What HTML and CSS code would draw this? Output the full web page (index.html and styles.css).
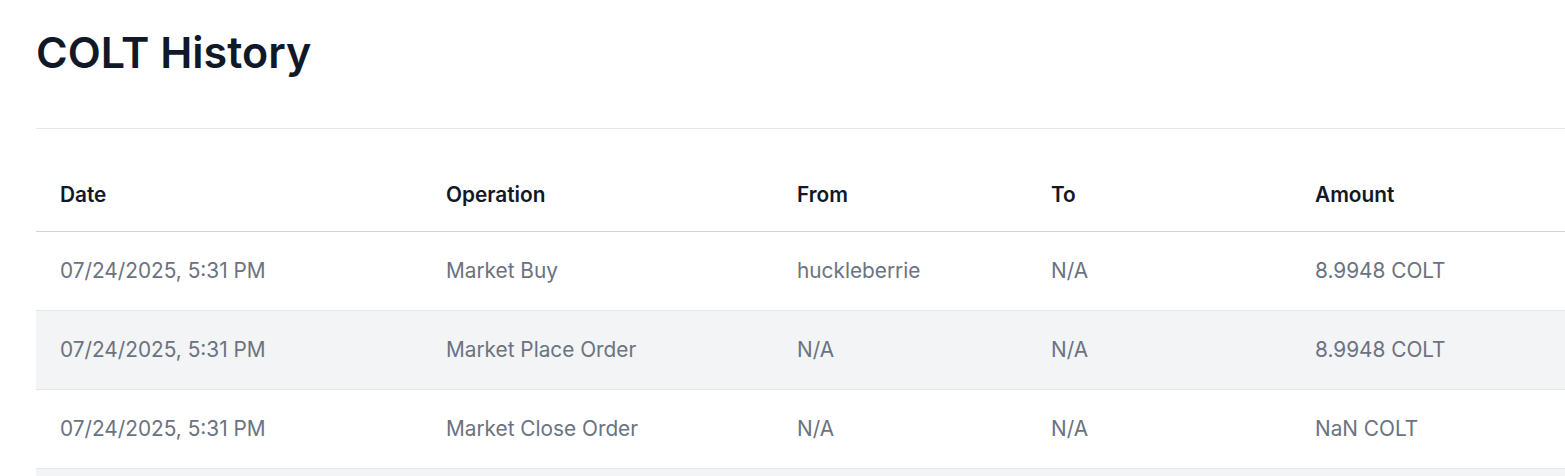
FILE: index.html
```html
<!DOCTYPE html>
<html lang="en">
<head>
<meta charset="utf-8">
<title>COLT History</title>
<link rel="stylesheet" href="styles.css">
</head>
<body>
<main class="page">
  <h1 class="title">COLT History</h1>
  <section class="history">
    <table class="table">
      <colgroup>
        <col class="c-date"><col class="c-op"><col class="c-from"><col class="c-to"><col class="c-amt">
      </colgroup>
      <thead>
        <tr><th>Date</th><th>Operation</th><th>From</th><th>To</th><th>Amount</th></tr>
      </thead>
      <tbody>
        <tr><td>07/24/2025, 5:31 PM</td><td>Market Buy</td><td>huckleberrie</td><td>N/A</td><td>8.9948 COLT</td></tr>
        <tr class="alt"><td>07/24/2025, 5:31 PM</td><td>Market Place Order</td><td>N/A</td><td>N/A</td><td>8.9948 COLT</td></tr>
        <tr><td>07/24/2025, 5:31 PM</td><td>Market Close Order</td><td>N/A</td><td>N/A</td><td>NaN COLT</td></tr>
        <tr class="alt"><td>07/24/2025, 5:31 PM</td><td>Market Buy</td><td>N/A</td><td>N/A</td><td>0 COLT</td></tr>
      </tbody>
    </table>
  </section>
</main>
</body>
</html>
```

FILE: styles.css
```css
html, body {
  margin: 0;
  padding: 0;
  background: #ffffff;
  overflow: hidden;
}
body {
  font-family: Inter, "Noto Sans", sans-serif;
  color: #111827;
}
.page {
  padding: 24px 0 0 36px;
}
.title {
  margin: 0;
  font-size: 43px;
  font-weight: 600;
  line-height: 56px;
  color: #111827;
}
.history {
  margin-top: 48px;
  border-top: 1px solid #e5e7eb;
  padding-top: 25px;
}
.table {
  width: 100%;
  border-collapse: collapse;
  table-layout: fixed;
}
.c-date { width: 386px; }
.c-op { width: 351px; }
.c-from { width: 254px; }
.c-to { width: 264px; }
.table th, .table td {
  text-align: left;
  padding: 24px 24px;
  font-size: 20.8px;
  line-height: 30px;
  white-space: nowrap;
}
.table th {
  padding-top: 26px;
  padding-bottom: 21px;
  font-weight: 600;
  color: #111827;
  border-bottom: 1px solid #d1d5db;
}
.table td {
  font-weight: 400;
  color: #6b7280;
  border-bottom: 1px solid #e5e7eb;
}
.table tr.alt td {
  background: #f3f4f6;
}
```
